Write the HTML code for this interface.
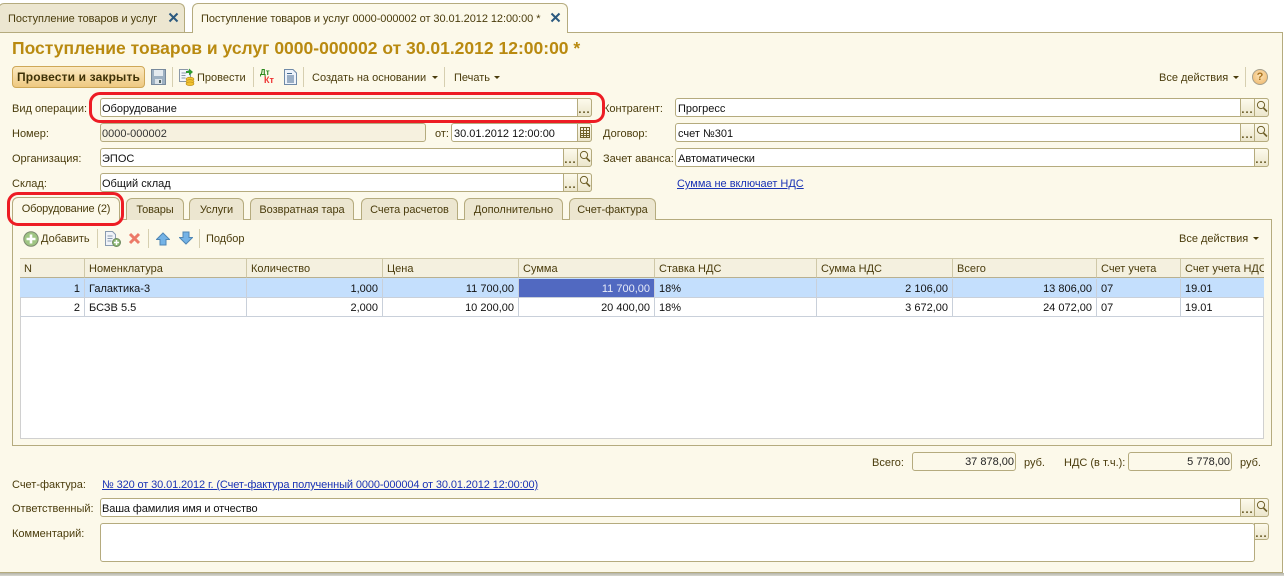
<!DOCTYPE html>
<html><head><meta charset="utf-8"><style>
html,body{margin:0;padding:0;background:#fff;width:1284px;height:576px;overflow:hidden}
#r{position:relative;width:1284px;height:576px;overflow:hidden;font:11px/14px "Liberation Sans",Arial,sans-serif;color:#4a3c0c}
#r div,#r a,#r svg{position:absolute}
.t{white-space:nowrap;margin-top:1px}
.v{white-space:nowrap;color:#111;margin-top:1px}
.f{background:#fff;border:1px solid #b5ab7e;border-radius:3px;box-sizing:border-box;height:19px}
.b{background:linear-gradient(#fdfaec,#ece6cc);border:1px solid #b5ab7e;box-sizing:border-box;height:19px;width:15px;text-align:center;font-weight:bold;font-size:11px;line-height:23px;color:#5e4f18;letter-spacing:1px;overflow:hidden}
.rr{border-radius:0 3px 3px 0}
.s{width:1px;background:#d6cfb0}
.tab{box-sizing:border-box;background:#ece6d0;border:1px solid #b5ab7e;border-bottom:0;border-radius:6px 6px 0 0;height:22px;top:198px;text-align:center;line-height:22px;color:#4a3c0c}
.h{top:258px;height:20px;background:#f4f0df;border-right:1px solid #cfc8a8;border-bottom:1px solid #b8b090;border-top:1px solid #cfc8a8;box-sizing:border-box;line-height:20px;padding-left:4px;white-space:nowrap;overflow:hidden}
.c{height:19px;box-sizing:border-box;border-right:1px solid #c9d0da;border-bottom:1px solid #c9d0da;line-height:20px;padding:0 4px;white-space:nowrap;color:#111}
.n{text-align:right}
.a{width:0;height:0;border:3px solid transparent;border-top:3px solid #4a3c0c;border-bottom:0}
.lnk{color:#1a33b5;text-decoration:underline;white-space:nowrap;margin-top:1px}
.red{border:3px solid #ed1c24;box-sizing:border-box;border-radius:11px}
</style></head><body><div id="r">

<div style="left:0;top:32px;width:1283px;height:541px;background:#fcf9ea;border:1px solid #b5ab7e;box-sizing:border-box;border-left:0"></div>
<div style="left:0;top:573px;width:1284px;height:3px;background:linear-gradient(#b4b4a8,#d8d8d0)"></div>

<!-- top tabs -->
<div style="left:-2px;top:3px;width:187px;height:29px;background:#ece6d0;border:1px solid #b5ab7e;border-bottom:0;border-radius:6px 6px 0 0;box-sizing:border-box"></div>
<div class="t" style="left:8px;top:11px;letter-spacing:-.03px">Поступление товаров и услуг</div>
<svg style="left:168px;top:12px" width="11" height="11" viewBox="0 0 11 11"><path d="M1.500 1.500L9.500 9.500M9.500 1.500L1.500 9.500" stroke="#2c5a7f" stroke-width="2"/></svg>
<div style="left:192px;top:3px;width:376px;height:30px;background:#fcf9ea;border:1px solid #b5ab7e;border-bottom:0;border-radius:6px 6px 0 0;box-sizing:border-box"></div>
<div class="t" style="left:201px;top:11px;letter-spacing:-.06px">Поступление товаров и услуг 0000-000002 от 30.01.2012 12:00:00 *</div>
<svg style="left:550px;top:12px" width="11" height="11" viewBox="0 0 11 11"><path d="M1.500 1.500L9.500 9.500M9.500 1.500L1.500 9.500" stroke="#2c5a7f" stroke-width="2"/></svg>

<div class="t" style="left:12px;top:37px;font:bold 17.5px/21px 'Liberation Sans',Arial,sans-serif;color:#b98a10">Поступление товаров и услуг 0000-000002 от 30.01.2012 12:00:00 *</div>

<!-- toolbar -->
<div style="left:12px;top:66px;width:133px;height:22px;box-sizing:border-box;background:linear-gradient(#fbe9c0,#eec981);border:1px solid #cfa858;border-radius:4px;text-align:center;font-weight:bold;line-height:21px;font-size:12px;letter-spacing:.15px;color:#3e3208;white-space:nowrap">Провести и закрыть</div>
<svg style="left:151px;top:69px" width="15" height="16" viewBox="0 0 15 16"><rect x=".5" y=".5" width="14" height="15" fill="#9db0c2" stroke="#77899c"/><rect x="3" y="1" width="9" height="6" fill="#e4eaef"/><rect x="4" y="10" width="7" height="5" fill="#dde4ea"/><rect x="8" y="11" width="2" height="3" fill="#566"/></svg>
<div class="s" style="left:172px;top:67px;height:20px"></div>
<svg style="left:179px;top:68px" width="16" height="18" viewBox="0 0 16 18"><path d="M.5 1.500h8l3 3v9h-11z" fill="#f4f6fa" stroke="#8b98a8"/><path d="M2.500 5h5M2.500 7.500h4M2.500 10h4" stroke="#8b98a8"/><path d="M7 3h3V.5l4 3.500-4 3.500V5H7z" fill="#2f9b2f"/><ellipse cx="11" cy="11" rx="4" ry="1.800" fill="#f1c232" stroke="#b98a10" stroke-width=".6"/><ellipse cx="11" cy="13.500" rx="4" ry="1.800" fill="#f1c232" stroke="#b98a10" stroke-width=".6"/><ellipse cx="11" cy="15.800" rx="4" ry="1.800" fill="#f1c232" stroke="#b98a10" stroke-width=".6"/></svg>
<div class="t" style="left:197px;top:70px">Провести</div>
<div class="s" style="left:253px;top:67px;height:20px"></div>
<div class="t" style="left:260px;top:67px;font:bold 8px/9px 'Liberation Sans',sans-serif;color:#2c8a1e">Дт</div>
<div class="t" style="left:264px;top:75px;font:bold 9px/9px 'Liberation Sans',sans-serif;color:#ee3333">Кт</div>
<svg style="left:284px;top:69px" width="13" height="16" viewBox="0 0 13 16"><path d="M.5.500h8.500l3.500 3.500v11.500H.5z" fill="#eef3fa" stroke="#6f8aa8"/><path d="M3 4.500h5M3 7h7M3 9h7M3 11h7M3 13h7" stroke="#456a90"/></svg>
<div class="s" style="left:303px;top:67px;height:20px"></div>
<div class="t" style="left:312px;top:70px">Создать на основании</div>
<div class="a" style="left:432px;top:76px"></div>
<div class="s" style="left:444px;top:67px;height:20px"></div>
<div class="t" style="left:454px;top:70px">Печать</div>
<div class="a" style="left:494px;top:76px"></div>
<div class="t" style="left:1159px;top:70px">Все действия</div>
<div class="a" style="left:1233px;top:76px"></div>
<div class="s" style="left:1245px;top:67px;height:20px"></div>
<div style="left:1252px;top:69px;width:16px;height:16px;box-sizing:border-box;border-radius:50%;background:radial-gradient(circle at 50% 40%,#fbe4b8,#eeb364);border:1px solid #a6a08c;text-align:center;font-weight:bold;line-height:14px;font-size:11px;color:#a8701c">?</div>

<!-- left fields -->
<div class="t" style="left:12px;top:101px">Вид операции:</div>
<div class="f" style="left:100px;top:98px;width:492px"></div>
<div class="v" style="left:102px;top:101px">Оборудование</div>
<div class="b rr" style="left:577px;top:98px">...</div>

<div class="t" style="left:12px;top:126px">Номер:</div>
<div class="f" style="left:100px;top:123px;width:326px;background:#f6f1df"></div>
<div class="t" style="left:102px;top:126px;color:#333">0000-000002</div>
<div class="t" style="left:435px;top:126px">от:</div>
<div class="f" style="left:451px;top:123px;width:141px"></div>
<div class="v" style="left:454px;top:126px">30.01.2012 12:00:00</div>
<div class="b rr" style="left:577px;top:123px"></div>
<svg style="left:579px;top:126px" width="12" height="13" viewBox="0 0 12 13"><path d="M1.500 1.500h9v10h-9zM1.500 4.500h9M1.500 7.500h9M1.500 9.500h9M4.500 1.500v10M7.500 1.500v10" fill="none" stroke="#6e5f28"/></svg>

<div class="t" style="left:12px;top:151px">Организация:</div>
<div class="f" style="left:100px;top:148px;width:492px"></div>
<div class="v" style="left:102px;top:151px">ЭПОС</div>
<div class="b" style="left:563px;top:148px">...</div>
<div class="b rr" style="left:577px;top:148px"></div>
<svg style="left:579px;top:150px" width="12" height="13" viewBox="0 0 12 13"><circle cx="5" cy="5" r="3.600" fill="none" stroke="#6e5f28" stroke-width="1"/><path d="M7.500 8L11 11.500" stroke="#6e5f28" stroke-width="1.600"/></svg>

<div class="t" style="left:12px;top:176px">Склад:</div>
<div class="f" style="left:100px;top:173px;width:492px"></div>
<div class="v" style="left:102px;top:176px">Общий склад</div>
<div class="b" style="left:563px;top:173px">...</div>
<div class="b rr" style="left:577px;top:173px"></div>
<svg style="left:579px;top:175px" width="12" height="13" viewBox="0 0 12 13"><circle cx="5" cy="5" r="3.600" fill="none" stroke="#6e5f28" stroke-width="1"/><path d="M7.500 8L11 11.500" stroke="#6e5f28" stroke-width="1.600"/></svg>

<!-- right fields -->
<div class="t" style="left:603px;top:101px">Контрагент:</div>
<div class="f" style="left:675px;top:98px;width:594px"></div>
<div class="v" style="left:678px;top:101px">Прогресс</div>
<div class="b" style="left:1240px;top:98px">...</div>
<div class="b rr" style="left:1254px;top:98px"></div>
<svg style="left:1256px;top:100px" width="12" height="13" viewBox="0 0 12 13"><circle cx="5" cy="5" r="3.600" fill="none" stroke="#6e5f28" stroke-width="1"/><path d="M7.500 8L11 11.500" stroke="#6e5f28" stroke-width="1.600"/></svg>

<div class="t" style="left:603px;top:126px">Договор:</div>
<div class="f" style="left:675px;top:123px;width:594px"></div>
<div class="v" style="left:678px;top:126px">счет №301</div>
<div class="b" style="left:1240px;top:123px">...</div>
<div class="b rr" style="left:1254px;top:123px"></div>
<svg style="left:1256px;top:125px" width="12" height="13" viewBox="0 0 12 13"><circle cx="5" cy="5" r="3.600" fill="none" stroke="#6e5f28" stroke-width="1"/><path d="M7.500 8L11 11.500" stroke="#6e5f28" stroke-width="1.600"/></svg>

<div class="t" style="left:603px;top:151px">Зачет аванса:</div>
<div class="f" style="left:675px;top:148px;width:594px"></div>
<div class="v" style="left:678px;top:151px">Автоматически</div>
<div class="b rr" style="left:1254px;top:148px">...</div>

<a class="lnk" style="left:677px;top:176px;letter-spacing:-.02px">Сумма не включает НДС</a>

<!-- section tabs -->
<div style="left:12px;top:219px;width:1260px;height:227px;box-sizing:border-box;border:1px solid #b5ab7e"></div>
<div class="tab" style="left:12px;top:197px;width:108px;height:23px;background:#fcf9ea;line-height:23px;letter-spacing:-.17px;white-space:nowrap">Оборудование (2)</div>
<div class="tab" style="left:126px;width:58px;letter-spacing:-.1px">Товары</div>
<div class="tab" style="left:189px;width:55px;letter-spacing:-.1px">Услуги</div>
<div class="tab" style="left:250px;width:104px;letter-spacing:-.03px">Возвратная тара</div>
<div class="tab" style="left:361px;width:97px;letter-spacing:-.05px">Счета расчетов</div>
<div class="tab" style="left:464px;width:99px">Дополнительно</div>
<div class="tab" style="left:569px;width:87px;letter-spacing:-.03px">Счет-фактура</div>

<!-- inner toolbar -->
<svg style="left:23px;top:231px" width="16" height="16" viewBox="0 0 16 16"><circle cx="8" cy="8" r="7.200" fill="#9fc583" stroke="#7d8a70"/><path d="M8 3.500v9M3.500 8h9" stroke="#fff" stroke-width="2.600"/></svg>
<div class="t" style="left:41px;top:231px">Добавить</div>
<div class="s" style="left:97px;top:229px;height:19px"></div>
<svg style="left:105px;top:231px" width="16" height="16" viewBox="0 0 16 16"><path d="M.5.500h7l3 3v11H.5z" fill="#f0f3f8" stroke="#8a9bb0"/><path d="M2.500 5h5M2.500 7.500h5M2.500 10h4" stroke="#8a9bb0"/><circle cx="11.500" cy="11.500" r="4" fill="#8cb872" stroke="#6f8a60"/><path d="M11.500 9v5M9 11.500h5" stroke="#fff" stroke-width="1.500"/></svg>
<svg style="left:128px;top:232px" width="13" height="13" viewBox="0 0 13 13"><path d="M2 2L11 11M11 2L2 11" stroke="#ec7a68" stroke-width="3"/></svg>
<div class="s" style="left:148px;top:229px;height:19px"></div>
<svg style="left:156px;top:232px" width="14" height="14" viewBox="0 0 14 14"><path d="M7 1L13.500 7.500H10V13H4V7.500H.5z" fill="#74b3e6" stroke="#4f86b4"/></svg>
<svg style="left:179px;top:231px" width="14" height="14" viewBox="0 0 14 14"><path d="M7 13L13.500 6.500H10V1H4V6.500H.5z" fill="#74b3e6" stroke="#4f86b4"/></svg>
<div class="s" style="left:199px;top:229px;height:19px"></div>
<div class="t" style="left:206px;top:231px;letter-spacing:-.05px">Подбор</div>
<div class="t" style="left:1179px;top:231px">Все действия</div>
<div class="a" style="left:1253px;top:237px"></div>

<!-- table -->
<div style="left:20px;top:258px;width:1244px;height:181px;background:#fff;border:1px solid #d0d0d0;border-top:0;box-sizing:border-box"></div>
<div class="h" style="left:20px;width:65px">N</div>
<div class="h" style="left:85px;width:162px">Номенклатура</div>
<div class="h" style="left:247px;width:136px">Количество</div>
<div class="h" style="left:383px;width:136px">Цена</div>
<div class="h" style="left:519px;width:136px">Сумма</div>
<div class="h" style="left:655px;width:162px">Ставка НДС</div>
<div class="h" style="left:817px;width:136px">Сумма НДС</div>
<div class="h" style="left:953px;width:144px">Всего</div>
<div class="h" style="left:1097px;width:84px">Счет учета</div>
<div class="h" style="left:1181px;width:83px;border-right:0">Счет учета НДС</div>

<div style="left:20px;top:278px;width:1244px;height:19px;background:#c4dffd"></div>
<div class="c n" style="left:20px;top:279px;width:65px">1</div>
<div class="c" style="left:85px;top:279px;width:162px">Галактика-3</div>
<div class="c n" style="left:247px;top:279px;width:136px">1,000</div>
<div class="c n" style="left:383px;top:279px;width:136px">11 700,00</div>
<div class="c n" style="left:519px;top:279px;width:136px;background:#5169c1;color:#e8ecf8">11 700,00</div>
<div class="c" style="left:655px;top:279px;width:162px">18%</div>
<div class="c n" style="left:817px;top:279px;width:136px">2 106,00</div>
<div class="c n" style="left:953px;top:279px;width:144px">13 806,00</div>
<div class="c" style="left:1097px;top:279px;width:84px">07</div>
<div class="c" style="left:1181px;top:279px;width:83px;border-right:0">19.01</div>

<div class="c n" style="left:20px;top:298px;width:65px">2</div>
<div class="c" style="left:85px;top:298px;width:162px">БСЗВ 5.5</div>
<div class="c n" style="left:247px;top:298px;width:136px">2,000</div>
<div class="c n" style="left:383px;top:298px;width:136px">10 200,00</div>
<div class="c n" style="left:519px;top:298px;width:136px">20 400,00</div>
<div class="c" style="left:655px;top:298px;width:162px">18%</div>
<div class="c n" style="left:817px;top:298px;width:136px">3 672,00</div>
<div class="c n" style="left:953px;top:298px;width:144px">24 072,00</div>
<div class="c" style="left:1097px;top:298px;width:84px">07</div>
<div class="c" style="left:1181px;top:298px;width:83px;border-right:0">19.01</div>

<!-- totals -->
<div class="t" style="left:872px;top:455px">Всего:</div>
<div class="f" style="left:912px;top:452px;width:104px;background:#fcf9ea;text-align:right;padding-right:1px;line-height:18px;color:#222">37 878,00</div>
<div class="t" style="left:1024px;top:455px">руб.</div>
<div class="t" style="left:1064px;top:455px">НДС (в т.ч.):</div>
<div class="f" style="left:1128px;top:452px;width:104px;background:#fcf9ea;text-align:right;padding-right:1px;line-height:18px;color:#222">5 778,00</div>
<div class="t" style="left:1240px;top:455px">руб.</div>

<!-- footer -->
<div class="t" style="left:12px;top:477px">Счет-фактура:</div>
<a class="lnk" style="left:102px;top:477px;letter-spacing:-.12px">№ 320 от 30.01.2012 г. (Счет-фактура полученный 0000-000004 от 30.01.2012 12:00:00)</a>
<div class="t" style="left:12px;top:501px">Ответственный:</div>
<div class="f" style="left:100px;top:498px;width:1169px"></div>
<div class="v" style="left:102px;top:501px;letter-spacing:-.13px">Ваша фамилия имя и отчество</div>
<div class="b" style="left:1240px;top:498px">...</div>
<div class="b rr" style="left:1254px;top:498px"></div>
<svg style="left:1256px;top:500px" width="12" height="13" viewBox="0 0 12 13"><circle cx="5" cy="5" r="3.600" fill="none" stroke="#6e5f28" stroke-width="1"/><path d="M7.500 8L11 11.500" stroke="#6e5f28" stroke-width="1.600"/></svg>
<div class="t" style="left:12px;top:526px">Комментарий:</div>
<div class="f" style="left:100px;top:523px;width:1155px;height:39px"></div>
<div class="b rr" style="left:1254px;top:523px;height:17px;line-height:21px">...</div>

<!-- red highlights -->
<div class="red" style="left:89px;top:92px;width:516px;height:31px"></div>
<div class="red" style="left:7px;top:192px;width:117px;height:34px"></div>

</div></body></html>
